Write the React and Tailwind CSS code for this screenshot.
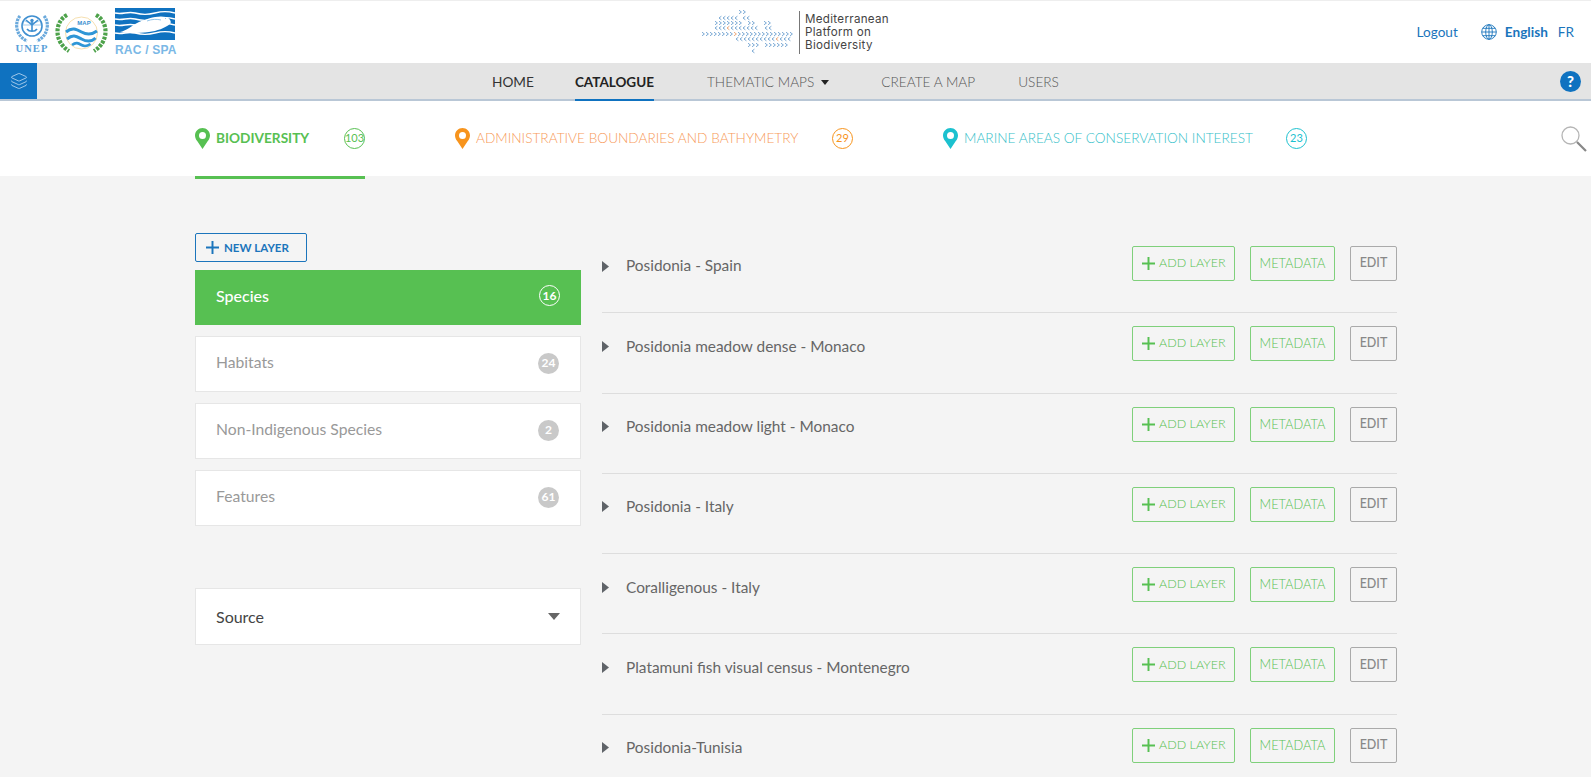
import { Layers } from "lucide-react";

const rows = [
  "Posidonia - Spain",
  "Posidonia meadow dense - Monaco",
  "Posidonia meadow light - Monaco",
  "Posidonia - Italy",
  "Coralligenous - Italy",
  "Platamuni fish visual census - Montenegro",
  "Posidonia-Tunisia",
];

const categories = [
  { name: "Habitats", count: 24 },
  { name: "Non-Indigenous Species", count: 2 },
  { name: "Features", count: 61 },
];

// logo chevron rows: [x, y, count, direction]
const chevrons = [
  [739, 13, 2, 1],
  [719, 19, 5, -1],
  [743, 19, 2, -1],
  [715, 24, 7, 1],
  [748, 24, 2, 1],
  [764, 24, 2, 1],
  [715, 29, 11, -1],
  [765, 29, 2, -1],
  [702, 35, 23, 1],
  [736, 40, 14, -1],
  [748, 46, 3, 1],
  [765, 46, 6, 1],
  [752, 52, 1, -1],
];

const isOrange = (y, cx) =>
  (y === 29 && cx === 727) || (y === 35 && cx === 734) || (y === 40 && cx === 776);

const Pin = ({ color }) => (
  <svg width="15" height="21" viewBox="0 0 15 21" className="shrink-0">
    <path
      d="M7.5 0C3.4 0 0 3.3 0 7.4c0 2.2 1 4 2.2 5.7L7.5 21l5.3-7.9C14 11.400 15 9.600 15 7.400 15 3.300 11.600 0 7.500 0Z"
      fill={color}
    />
    <circle cx="7.500" cy="7.400" r="3.500" fill="white" />
  </svg>
);

const Plus = ({ color, size }) => (
  <svg width={size} height={size} viewBox="0 0 12 12" className="shrink-0">
    <path d="M6 0v12M0 6h12" stroke={color} strokeWidth="1.800" />
  </svg>
);

const UnepLogo = () => (
  <div className="flex flex-col items-center w-[34px] mt-[4px]">
    <svg width="34" height="31" viewBox="0 0 34 31">
      <circle cx="17" cy="14" r="10" fill="none" stroke="#3f8fd0" strokeWidth="1.600" />
      <path d="M7.500 13h19M9 8.500c5 3 11 3 16 0" fill="none" stroke="#8fc0e6" strokeWidth="0.800" />
      <circle cx="17" cy="8.500" r="1.700" fill="#3f8fd0" />
      <path d="M17 10v10M11 8l6 5 6-5M12 17c2 3 8 3 10 0" fill="none" stroke="#3f8fd0" strokeWidth="1.600" />
      <path d="M5 4C-1 11 1 24 12 29M29 4c6 7 4 20-7 25" fill="none" stroke="#6aa9dc" strokeWidth="3.200" strokeDasharray="2.500 0.800" />
    </svg>
    <span className="text-[10.500px] leading-[10px] mt-[1px] tracking-[1.100px] font-bold text-[#5a9fd8] font-['Liberation_Serif',serif]">UNEP</span>
  </div>
);

const MapLogo = () => (
  <svg width="53" height="40" viewBox="0 0 53 40" className="ml-[6px] mt-[5px]">
    <path d="M12 2C-1 9-1 29 14 38M41 2c13 7 13 27-2 36" fill="none" stroke="#4da24a" strokeWidth="4.200" strokeDasharray="3 1.200" />
    <circle cx="26.500" cy="20" r="16" fill="white" stroke="#f3d79a" strokeWidth="0.800" />
    <path d="M11 19c6-5 10-3 15.500 0s10 3 15.500-1" fill="none" stroke="#2f96d6" strokeWidth="3" />
    <path d="M12 26c6-5 9-3 14.500 0s10 3 14-1" fill="none" stroke="#2f96d6" strokeWidth="3" />
    <path d="M17 32c4-3 6-2 9.500 0s6 1 9-1" fill="none" stroke="#2f96d6" strokeWidth="2.600" />
    <text x="29" y="12" textAnchor="middle" fontSize="6" fontWeight="700" fill="#3a8fd0" fontFamily="Liberation Sans, sans-serif">MAP</text>
  </svg>
);

const RacLogo = () => (
  <div className="flex flex-col ml-[7px] w-[60px]">
    <svg width="60" height="32" viewBox="0 0 60 32">
      <rect width="60" height="32" fill="#0f72c0" />
      <path d="M0 5c8 2 12-2 20 0s12 2 20 0 12-2 20 0M0 11c8 2 12-2 20 0s12 2 20 0 12-2 20 0M0 17c8 2 12-2 20 0s12 2 20 0 12-2 20 0" stroke="white" strokeWidth="1.400" fill="none" />
      <path d="M0 25c8 2 12-2 20 0s12 2 20 0 12-2 20 0" stroke="white" strokeWidth="1.600" fill="none" />
      <path d="M5 24c6-1 11-6 19-10 8-3 18-7 27-5 4 1 6 5 4 7-5 4-13 7-21 8-9 1-20 2-29 0Z" fill="white" />
      <path d="M32 13c5-2 10-2 14-1M50 10l1 1" stroke="#7ab8e6" strokeWidth="0.800" fill="none" />
    </svg>
    <span className="mt-[4px] whitespace-nowrap text-[12px] leading-[12px] font-bold tracking-[0.200px] text-[#7ab8e6] font-['Liberation_Sans',sans-serif]">RAC / SPA</span>
  </div>
);

const PlatformLogo = () => (
  <div className="flex items-center">
    <svg width="95" height="46" viewBox="700 10 95 46">
      {chevrons.map(([x, y, n, dir]) =>
        Array.from({ length: n }).map((_, i) => {
          const cx = x + i * 4;
          return (
            <path
              key={`${x}-${y}-${i}`}
              d={dir > 0 ? `M${cx} ${y - 1.800}l2.400 1.800-2.400 1.800` : `M${cx + 2.400} ${y - 1.800}l-2.400 1.800 2.400 1.800`}
              fill="none"
              stroke={isOrange(y, cx) ? "#e8935a" : "#5a94c9"}
              strokeWidth="0.800"
            />
          );
        })
      )}
    </svg>
    <div className="w-px h-[43px] bg-[#777] ml-[4px]" />
    <div className="ml-[5px] text-[11.600px] leading-[13px] text-[#444] tracking-[0.300px] font-['Inter',sans-serif]">
      <div>Mediterranean</div>
      <div>Platform on</div>
      <div>Biodiversity</div>
    </div>
  </div>
);

const NavItem = ({ children, className }) => (
  <a className={`flex items-center h-full pt-[2px] ${className}`}>{children}</a>
);

const Tab = ({ color, textColor, label, count, width, bold, underline }) => (
  <div className={`relative flex items-center h-[75px] ${width}`}>
    <Pin color={color} />
    <span
      className={`ml-[6px] text-[13.660px] whitespace-nowrap ${bold ? "font-bold" : "font-light"}`}
      style={{ color: textColor }}
    >
      {label}
    </span>
    <span
      className="ml-auto flex items-center justify-center w-[21px] h-[21px] rounded-full border text-[11px]"
      style={{ borderColor: color, color: bold ? "#57c052" : color }}
    >
      {count}
    </span>
    {underline && <div className="absolute left-0 right-0 -bottom-[3px] h-[3px] bg-[#57c052]" />}
  </div>
);

const Row = ({ name, last }) => (
  <div className={`h-[80.300px] pt-[13px] ${last ? "" : "border-b border-[#dddddd]"}`}>
    <div className="flex items-center h-[35px]">
      <svg width="7" height="11" viewBox="0 0 7 11" className="mt-[5px] shrink-0">
        <path d="M0 0l7 5.500L0 11Z" fill="#5f6368" />
      </svg>
      <span className="mt-[5px] ml-[17px] text-[15.400px] text-[#666]">{name}</span>
      <div className="ml-auto flex items-center gap-[15px]">
        <button className="flex items-center h-[35px] w-[103px] pl-[9px] border border-[#7fd07b] rounded-[2px] text-[12.500px] font-light text-[#57c052]">
          <Plus color="#57c052" size={13} />
          <span className="ml-[4px]">ADD LAYER</span>
        </button>
        <button className="h-[35px] w-[85px] border border-[#7fd07b] rounded-[2px] text-[12.800px] font-light text-[#57c052]">
          METADATA
        </button>
        <button className="h-[35px] w-[47px] border border-[#aaaaaa] rounded-[2px] text-[12.500px] font-medium text-[#888]">
          EDIT
        </button>
      </div>
    </div>
  </div>
);

const App = () => {
  return (
    <div className="h-[777px] overflow-hidden bg-[#f4f4f4] font-['Lato',sans-serif]">
      {/* top header */}
      <header className="flex h-[63px] bg-white border-t border-[#eeeeee]">
        <div className="flex flex-1 items-start pl-[15px] pt-[7px]">
          <UnepLogo />
          <MapLogo />
          <RacLogo />
        </div>
        <div className="flex items-center">
          <PlatformLogo />
        </div>
        <div className="flex flex-1 items-center justify-end pr-[17px] text-[13.600px] text-[#1b75bc]">
          <a>Logout</a>
          <svg width="16" height="16" viewBox="0 0 16 16" className="ml-[23px]" fill="none" stroke="#1b75bc" strokeWidth="0.900">
            <circle cx="8" cy="8" r="7.300" />
            <ellipse cx="8" cy="8" rx="3.300" ry="7.300" />
            <path d="M8 .7v14.600M.7 8h14.600M1.700 4.300h12.600M1.700 11.700h12.600" />
          </svg>
          <span className="ml-[8px] font-bold">English</span>
          <span className="ml-[10px]">FR</span>
        </div>
      </header>

      {/* nav bar */}
      <nav className="flex items-stretch h-[38px] bg-[#e4e4e4] border-b-2 border-[#b9c7d6]">
        <div className="flex items-center justify-center w-[37px] bg-[#0f72c0]">
          <Layers size={18} strokeWidth={1} color="#cfe3f5" />
        </div>
        <div className="flex items-stretch ml-[455px] text-[13.650px]">
          <NavItem className="font-normal text-[#333]">HOME</NavItem>
          <NavItem className="relative ml-[41px] text-[13.500px] font-bold text-[#222]">
            CATALOGUE
            <div className="absolute left-0 right-0 -bottom-[2px] h-[2px] bg-[#0f72c0]" />
          </NavItem>
          <NavItem className="ml-[53px] font-light text-[#555]">
            THEMATIC MAPS
            <svg width="8" height="5" viewBox="0 0 8 5" className="ml-[7px]">
              <path d="M0 0h8L4 5Z" fill="#222" />
            </svg>
          </NavItem>
          <NavItem className="ml-[52px] font-light text-[#555]">CREATE A MAP</NavItem>
          <NavItem className="ml-[43px] font-light text-[#555]">USERS</NavItem>
        </div>
        <div className="ml-auto flex items-center pr-[10px]">
          <span className="flex items-center justify-center w-[21px] h-[21px] rounded-full bg-[#0f72c0] text-white text-[15px] font-black">?</span>
        </div>
      </nav>

      {/* category tabs */}
      <div className="flex items-center h-[75px] pl-[195px] pr-[4px] bg-white">
        <Tab color="#57c052" textColor="#57c052" label="BIODIVERSITY" count="103" width="w-[170px]" bold underline />
        <div className="w-[90px]" />
        <Tab color="#f7941d" textColor="#f79a5a" label="ADMINISTRATIVE BOUNDARIES AND BATHYMETRY" count="29" width="w-[398px]" />
        <div className="w-[90px]" />
        <Tab color="#1cc1cf" textColor="#35c0c9" label="MARINE AREAS OF CONSERVATION INTEREST" count="23" width="w-[364px]" />
        <svg width="26" height="26" viewBox="0 0 26 26" className="ml-auto mt-[1px]">
          <circle cx="9.500" cy="9.500" r="8.500" fill="none" stroke="#b5b5b5" strokeWidth="1.300" />
          <path d="M16 16l9 9" stroke="#888" strokeWidth="2.200" />
        </svg>
      </div>

      {/* content */}
      <main className="flex pl-[195px] pr-[194px] pt-[55px]">
        <aside className="w-[386px] shrink-0 pt-[2px]">
          <button className="flex items-center h-[29px] w-[112px] pl-[10px] border border-[#1b75bc] rounded-[2px] text-[11.500px] font-bold text-[#1b75bc]">
            <Plus color="#1b75bc" size={13} />
            <span className="ml-[5px]">NEW LAYER</span>
          </button>
          <div className="flex items-center justify-between h-[55px] mt-[8px] px-[21px] pb-[4px] bg-[#57c052] text-white">
            <span className="text-[16px] font-medium">Species</span>
            <span className="flex items-center justify-center w-[21px] h-[21px] rounded-full border border-white text-[12px] font-bold">16</span>
          </div>
          {categories.map((c) => (
            <div
              key={c.name}
              className="flex items-center justify-between h-[56px] mt-[11px] pl-[20px] pr-[21px] pb-[2px] bg-white border border-[#e6e6e6] text-[#999]"
            >
              <span className="text-[15.700px]">{c.name}</span>
              <span className="flex items-center justify-center w-[21px] h-[21px] rounded-full bg-[#c9c9c9] text-white text-[12px] font-bold">{c.count}</span>
            </div>
          ))}
          <div className="flex items-center justify-between h-[57px] mt-[62px] pl-[20px] pr-[20px] bg-white border border-[#e6e6e6]">
            <span className="text-[16px] text-[#444]">Source</span>
            <svg width="12" height="7" viewBox="0 0 12 7">
              <path d="M0 0h12L6 7Z" fill="#666" />
            </svg>
          </div>
        </aside>
        <section className="flex-1 ml-[21px] -mt-[1px] pt-[3px]">
          {rows.map((r, i) => (
            <Row key={r} name={r} last={i === rows.length - 1} />
          ))}
        </section>
      </main>
    </div>
  );
};

export default App;
